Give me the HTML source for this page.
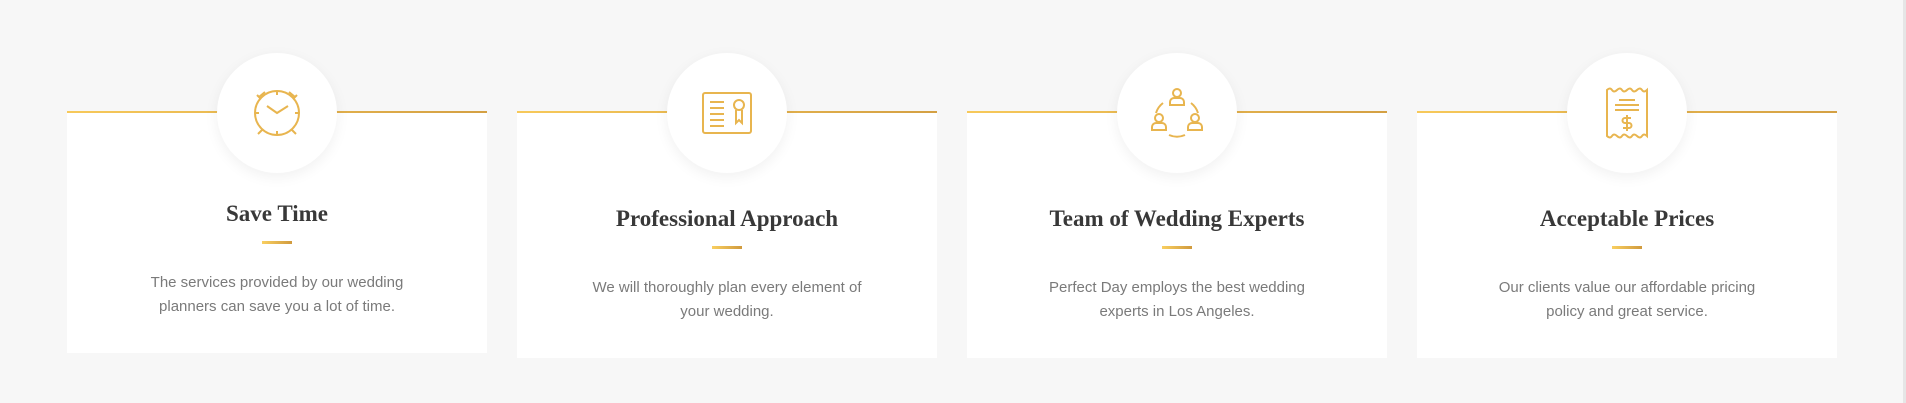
<!DOCTYPE html>
<html><head><meta charset="utf-8"><style>
html,body{margin:0;padding:0;width:1906px;height:403px;overflow:hidden;background:#f7f7f7;font-family:"Liberation Sans",sans-serif}
.sb{position:absolute;right:0;top:0;width:3px;height:403px;background:#e6e6e6}
.card{position:absolute;top:111px;width:420px;height:247px;background:#fff}
.card:before{content:"";position:absolute;left:0;top:0;width:100%;height:2px;background:linear-gradient(90deg,#f7c95a,#d4a043)}
.circ{position:absolute;left:150px;top:-58px;width:120px;height:120px;border-radius:50%;background:#fff;box-shadow:0 4px 14px rgba(0,0,0,.06);display:flex;align-items:center;justify-content:center}
.t{position:absolute;top:95px;left:0;width:100%;text-align:center;font-family:"Liberation Serif",serif;font-weight:bold;font-size:23px;color:#383838}
.d{position:absolute;top:135px;left:195px;width:30px;height:3px;background:linear-gradient(90deg,#f9cf60,#d09a3e)}
.p{position:absolute;top:165px;left:0;width:100%;text-align:center;font-size:15px;line-height:24px;color:#7a7a7a}
svg{stroke:#e8b54f;fill:none;stroke-width:2}
</style></head><body>
<div class="card" style="left:67px;height:242px">
 <div class="circ"><svg width="56" height="56" viewBox="0 0 56 56"><circle cx="28" cy="28" r="22"/><path d="M18 21l10 7 11-7M10 12l6-5M8 10l4 4M46 12l-6-5M48 10l-4 4M13 45l-4 4M43 45l4 4M28 6v4M28 46v4M6 28h4M46 28h4"/></svg></div>
 <div class="t" style="top:90px">Save Time</div><div class="d" style="top:130px"></div>
 <div class="p" style="top:160px">The services provided by our wedding<br>planners can save you a lot of time.</div>
</div>
<div class="card" style="left:517px">
 <div class="circ"><svg width="56" height="56" viewBox="0 0 56 56"><rect x="4" y="8" width="48" height="40" rx="2"/><path d="M11 17h14M11 23h14M11 29h14M11 35h14M11 41h14"/><circle cx="40" cy="20" r="5"/><path d="M37 25v13l3-3 3 3V25"/></svg></div>
 <div class="t">Professional Approach</div><div class="d"></div>
 <div class="p">We will thoroughly plan every element of<br>your wedding.</div>
</div>
<div class="card" style="left:967px">
 <div class="circ"><svg width="56" height="56" viewBox="0 0 56 56"><circle cx="28" cy="8" r="4"/><path d="M21 20v-3a4 4 0 0 1 4-4h6a4 4 0 0 1 4 4v3z"/><circle cx="10" cy="33" r="4"/><path d="M3 45v-3a4 4 0 0 1 4-4h6a4 4 0 0 1 4 4v3z"/><circle cx="46" cy="33" r="4"/><path d="M39 45v-3a4 4 0 0 1 4-4h6a4 4 0 0 1 4 4v3z"/><path d="M14 18a20 20 0 0 0-7 10M42 18a20 20 0 0 1 7 10M20 50a20 20 0 0 0 16 0"/></svg></div>
 <div class="t">Team of Wedding Experts</div><div class="d"></div>
 <div class="p">Perfect Day employs the best wedding<br>experts in Los Angeles.</div>
</div>
<div class="card" style="left:1417px">
 <div class="circ"><svg width="56" height="56" viewBox="0 0 56 56"><path d="M8 5q3-3 5 0t5 0 5 0 5 0 5 0 5 0 5 0 5 0v46q-3-3-5 0t-5 0-5 0-5 0-5 0-5 0-5 0-5 0z"/><path d="M20 15h16M16 20h24M16 25h24M32 33h-6a2 2 0 0 0 0 5h4a2 2 0 0 1 0 5h-6M28 30v16"/></svg></div>
 <div class="t">Acceptable Prices</div><div class="d"></div>
 <div class="p">Our clients value our affordable pricing<br>policy and great service.</div>
</div>
<div class="sb"></div>
</body></html>
